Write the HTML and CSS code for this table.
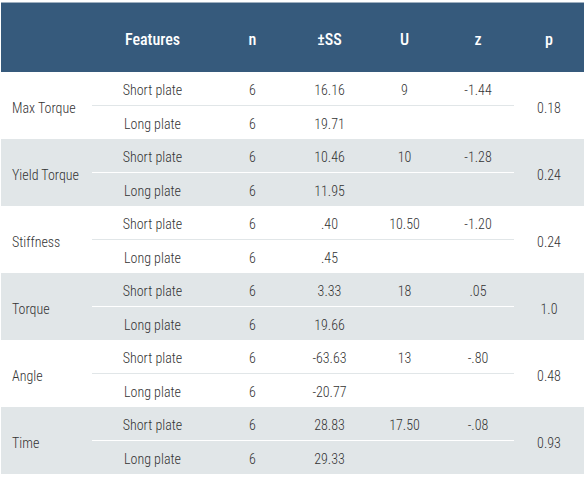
FILE: index.html
```html
<!DOCTYPE html>
<html>
<head>
<meta charset="utf-8">
<link rel="stylesheet" href="styles.css">
</head>
<body>
<table class="stats">
  <colgroup>
    <col class="c-label"><col class="c-feat"><col class="c-n"><col class="c-ss"><col class="c-u"><col class="c-z"><col class="c-p">
  </colgroup>
  <thead>
    <tr><th></th><th>Features</th><th>n</th><th>±SS</th><th>U</th><th>z</th><th>p</th></tr>
  </thead>
  <tbody>
    <tr class="first"><td class="label" rowspan="2">Max Torque</td><td>Short plate</td><td>6</td><td>16.16</td><td>9</td><td>-1.44</td><td class="p" rowspan="2">0.18</td></tr>
    <tr class="second"><td>Long plate</td><td>6</td><td>19.71</td><td></td><td></td></tr>
    <tr class="first alt"><td class="label" rowspan="2">Yield Torque</td><td>Short plate</td><td>6</td><td>10.46</td><td>10</td><td>-1.28</td><td class="p" rowspan="2">0.24</td></tr>
    <tr class="second alt"><td>Long plate</td><td>6</td><td>11.95</td><td></td><td></td></tr>
    <tr class="first"><td class="label" rowspan="2">Stiffness</td><td>Short plate</td><td>6</td><td>.40</td><td>10.50</td><td>-1.20</td><td class="p" rowspan="2">0.24</td></tr>
    <tr class="second"><td>Long plate</td><td>6</td><td>.45</td><td></td><td></td></tr>
    <tr class="first alt"><td class="label" rowspan="2">Torque</td><td>Short plate</td><td>6</td><td>3.33</td><td>18</td><td>.05</td><td class="p" rowspan="2">1.0</td></tr>
    <tr class="second alt"><td>Long plate</td><td>6</td><td>19.66</td><td></td><td></td></tr>
    <tr class="first"><td class="label" rowspan="2">Angle</td><td>Short plate</td><td>6</td><td>-63.63</td><td>13</td><td>-.80</td><td class="p" rowspan="2">0.48</td></tr>
    <tr class="second"><td>Long plate</td><td>6</td><td>-20.77</td><td></td><td></td></tr>
    <tr class="first alt"><td class="label" rowspan="2">Time</td><td>Short plate</td><td>6</td><td>28.83</td><td>17.50</td><td>-.08</td><td class="p" rowspan="2">0.93</td></tr>
    <tr class="second alt"><td>Long plate</td><td>6</td><td>29.33</td><td></td><td></td></tr>
  </tbody>
</table>
</body>
</html>
```
FILE: styles.css
```css
html, body {
  margin: 0;
  padding: 0;
  background: #ffffff;
}
body {
  padding: 2px 0 0 1px;
}
.stats {
  width: 583px;
  border-collapse: collapse;
  table-layout: fixed;
  font-family: "Roboto Condensed", "Liberation Sans Narrow", "DejaVu Sans Condensed", Roboto, sans-serif;
  color: #333333;
  font-size: 14px;
  font-weight: 300;
  border-top: 1px solid #9fb0c0;
}
.c-label { width: 91px; }
.c-feat { width: 121px; }
.c-n { width: 79px; }
.c-ss { width: 75px; }
.c-u { width: 75px; }
.c-z { width: 72px; }
.c-p { width: 70px; }
.stats thead th {
  background: #365a7c;
  color: #ffffff;
  font-weight: 500;
  font-size: 16px;
  height: 65px;
  padding: 4px 0 0;
  text-align: center;
}
.stats td {
  padding: 3px 0 0;
  text-align: center;
  vertical-align: middle;
  white-space: nowrap;
}
.stats tr.first td { height: 30px; border-bottom: 1px solid #e1e6e8; }
.stats tr.second td { height: 30px; }
.stats tr.first td.label,
.stats tr.first td.p { border-bottom: none; }
.stats tr.alt td { background: #e1e6e8; }
.stats tr.first.alt td { border-bottom-color: #ffffff; }
.stats td.label {
  text-align: left;
  padding-left: 11px;
  padding-top: 4px;
}
.stats td.p { padding-top: 4px; }
```
